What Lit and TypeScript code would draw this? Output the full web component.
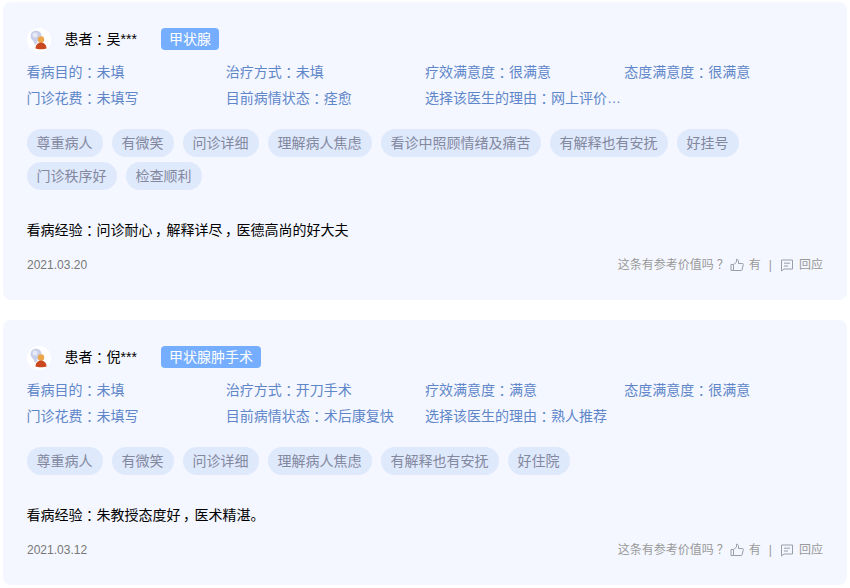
import { LitElement, html, css, svg } from "lit";
import { customElement } from "lit/decorators.js";

interface Review {
  name: string; tag: string; info: string[]; chips: string[]; exp: string; date: string; cls: string;
}
const reviews: Review[] = [
  {
    name: "吴***", tag: "甲状腺", cls: "first",
    info: ["看病目的：未填", "治疗方式：未填", "疗效满意度：很满意", "态度满意度：很满意", "门诊花费：未填写", "目前病情状态：痊愈", "选择该医生的理由：网上评价…"],
    chips: ["尊重病人", "有微笑", "问诊详细", "理解病人焦虑", "看诊中照顾情绪及痛苦", "有解释也有安抚", "好挂号", "门诊秩序好", "检查顺利"],
    exp: "看病经验：问诊耐心，解释详尽，医德高尚的好大夫", date: "2021.03.20",
  },
  {
    name: "倪***", tag: "甲状腺肿手术", cls: "second",
    info: ["看病目的：未填", "治疗方式：开刀手术", "疗效满意度：满意", "态度满意度：很满意", "门诊花费：未填写", "目前病情状态：术后康复快", "选择该医生的理由：熟人推荐"],
    chips: ["尊重病人", "有微笑", "问诊详细", "理解病人焦虑", "有解释也有安抚", "好住院"],
    exp: "看病经验：朱教授态度好，医术精湛。", date: "2021.03.12",
  },
];

/* Centres the full-width colon, comma and question mark in their cells. */
const punct = (text: string) =>
  text.split(/([：，？])/).map((part) =>
    /^[：，？]$/.test(part) ? html`<span class="p">${part}</span>` : part);

const avatar = svg`<svg class="avatar" viewBox="0 0 24 24" width="24" height="24">
  <circle cx="12" cy="12" r="12" fill="#fff"/>
  <circle cx="9" cy="8" r="5.500" fill="#c9cfe8"/>
  <circle cx="8" cy="7" r="2.500" fill="#e6e9f6"/>
  <path d="M6 12l2 5 3-3z" fill="#c9cfe8"/>
  <circle cx="14" cy="11.500" r="3.200" fill="#eda648"/>
  <path d="M8.500 20.500c0-3.500 2.500-6 5.500-6s5.500 2.500 5.500 6c-2 1-9 1-11 0z" fill="#c9481d"/>
</svg>`;
const thumb = svg`<svg class="ico" viewBox="0 0 14 14" width="14" height="14" fill="none" stroke="#9a9ea8" stroke-width="1">
  <path d="M1 6.500h2.500v6H1zM3.500 6.500L6.500 4V1.200c1.300 0 2 .8 2 2V5.500H12.500c.6 0 1 .5.800 1.100L12 12c-.1.300-.4.500-.8.500H3.500"/>
</svg>`;
const comment = svg`<svg class="ico" viewBox="0 0 14 14" width="14" height="14" fill="none" stroke="#9a9ea8" stroke-width="1">
  <path d="M1.500 2h11v9H4l-2.500 2z"/><path d="M4 5.200h6M4 8h4"/>
</svg>`;

@customElement("app-root")
export class AppRoot extends LitElement {
  static styles = css`
    :host { display: block; width: 850px; height: 588px; background: #fff; overflow: hidden;
      font-family: "Liberation Sans", "Noto Sans CJK SC", sans-serif; font-size: 14px; }
    .list { display: flex; flex-direction: column; gap: 20px; padding: 2px 3px 0; }
    .card { background: #f4f7ff; border-radius: 8px; padding: 26px 24px 0; box-sizing: border-box; }
    .first { height: 298px; }
    .second { height: 265px; }
    .p { display: inline-block; width: 1em; text-align: center; text-indent: 0; font-feature-settings: "palt"; }
    .head { display: flex; align-items: center; height: 24px; color: #000; }
    .avatar { display: block; margin-right: 14px; }
    .name { width: 96px; line-height: 22px; margin-top: -2px; text-indent: -.5px; }
    .tag { background: #76aeff; color: #fff; border-radius: 4px; padding: 0 8px; line-height: 22px; margin-top: -2px; }
    .info { display: grid; grid-template-columns: repeat(4, 199.250px); margin-top: 7px; color: #5e86c9; line-height: 26px; text-indent: -.5px; }
    .chips { display: flex; flex-wrap: wrap; gap: 5px 9px; margin-top: 18px; }
    .chip { background: #dfe9fc; color: #83889f; height: 28px; line-height: 28px; border-radius: 14px; padding: 0 10.500px 0 9.500px; }
    .exp { color: #000; line-height: 20px; margin-top: 30px; text-indent: -.5px; }
    .foot { display: flex; justify-content: space-between; align-items: center; margin-top: 15px; font-size: 12px; line-height: 20px; color: #999; }
    .date { color: #777; }
    .act { display: flex; align-items: center; }
    .ico { display: block; margin: 0 5px 0 4px; }
    .sep { margin: 0 4px 0 8px; }
  `;
  render() {
    return html`<div class="list">${reviews.map((r) => html`
      <section class="card ${r.cls}">
        <div class="head">${avatar}<span class="name">${punct("患者：" + r.name)}</span><span class="tag">${r.tag}</span></div>
        <div class="info">${r.info.map((t) => html`<div>${punct(t)}</div>`)}</div>
        <div class="chips">${r.chips.map((c) => html`<span class="chip">${c}</span>`)}</div>
        <div class="exp">${punct(r.exp)}</div>
        <div class="foot"><span class="date">${r.date}</span>
          <span class="act"><span>${punct("这条有参考价值吗？")}</span>${thumb}有<span class="sep">|</span>${comment}回应</span></div>
      </section>`)}</div>`;
  }
}
